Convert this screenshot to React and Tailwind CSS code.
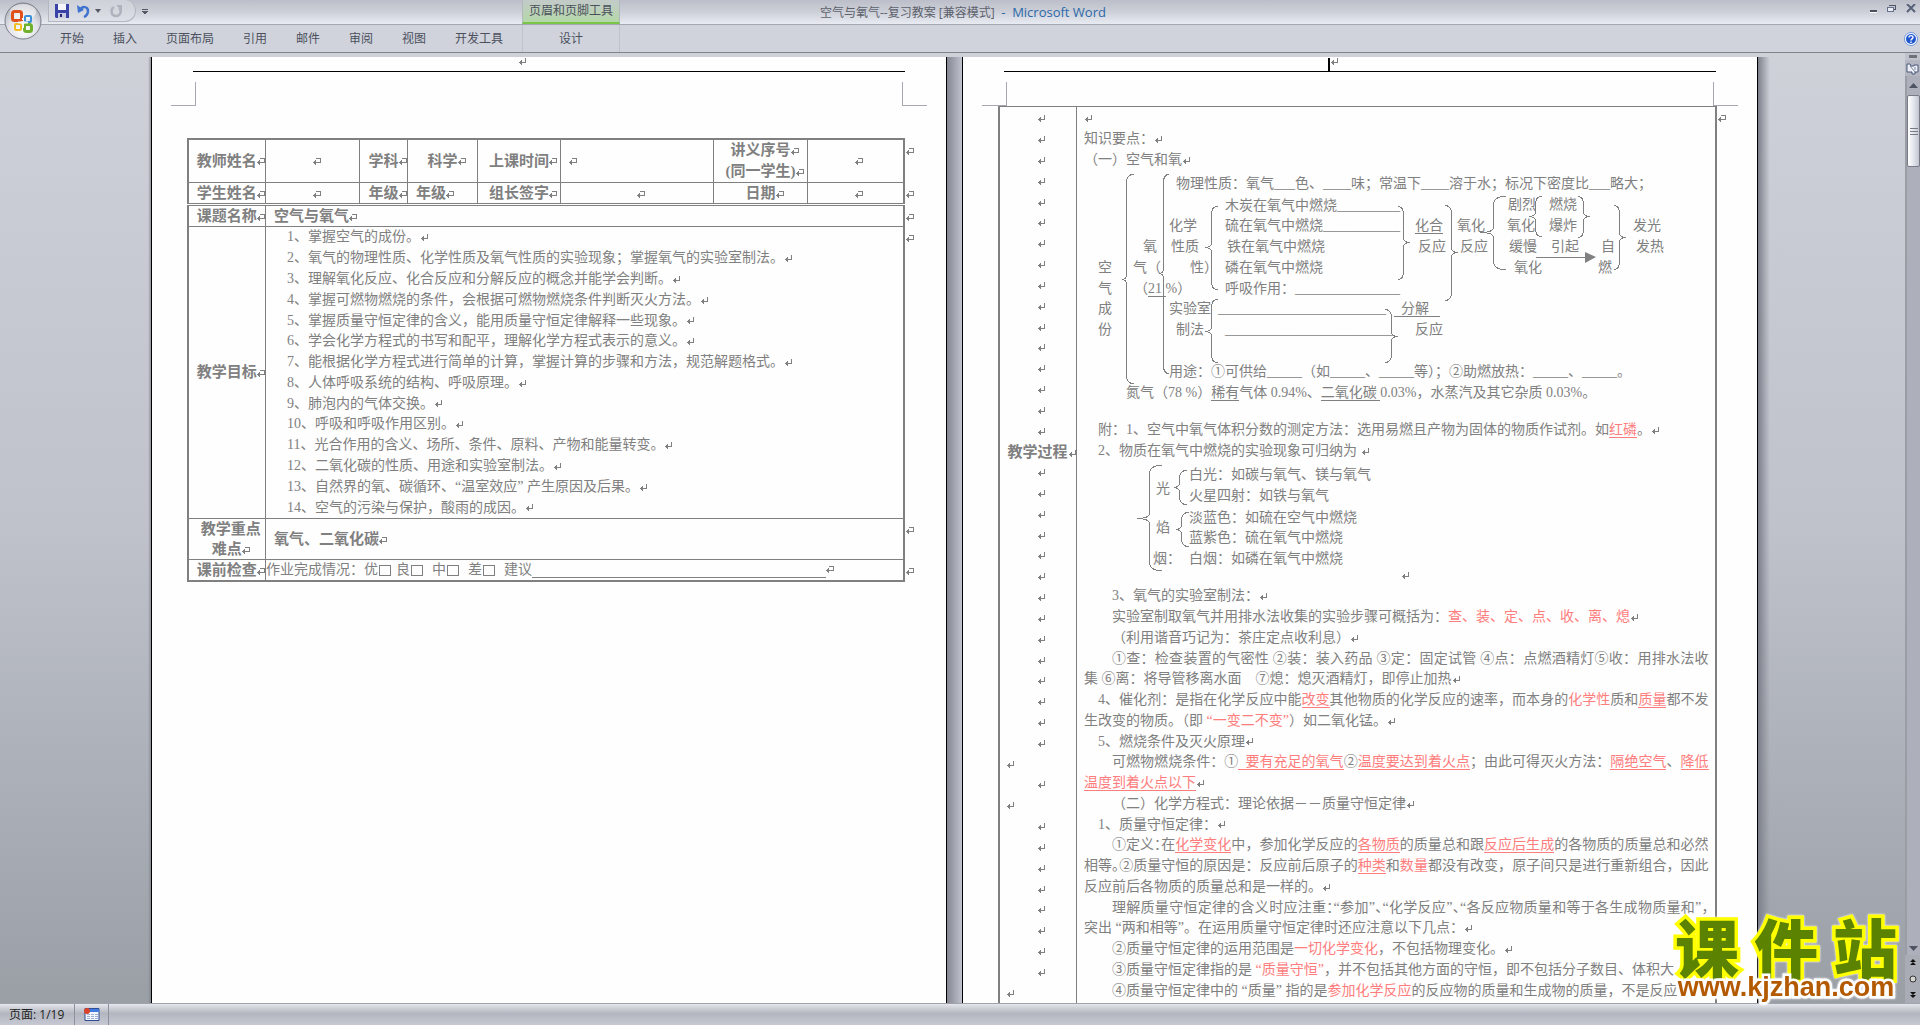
import React from "react";

/* ---------- editing marks ---------- */

function Ret({ className = "" }) {
  return (
    <svg
      aria-hidden="true"
      className={"inline-block h-[8px] w-[9px] shrink-0 align-middle " + className}
      viewBox="0 0 9 8"
      shapeRendering="crispEdges"
    >
      <path d="M7.5 0V4.5H1" fill="none" stroke="#808080" />
      <path d="M1 4h1v-1h1v-1h1v5h-1v-1h-1v-1h-1z" fill="#808080" />
    </svg>
  );
}

function CellEnd({ className = "" }) {
  return (
    <svg
      aria-hidden="true"
      className={"inline-block h-[8px] w-[8px] shrink-0 align-middle " + className}
      viewBox="0 0 8 8"
      shapeRendering="crispEdges"
    >
      <path d="M3.5 1V.5H7.5V4.5H1" fill="none" stroke="#808080" />
      <path d="M0 4h1v-1h1v-1h1v5h-1v-1h-1v-1h-1z" fill="#808080" />
    </svg>
  );
}

function RowEnd() {
  return <CellEnd className="absolute top-2 -right-[11px]" />;
}

/* ---------- title bar and ribbon tabs ---------- */

function OfficeButton() {
  return (
    <button aria-label="Office 按钮" className="absolute top-0.5 left-1 z-10">
      <svg width="38" height="38" viewBox="0 0 38 38">
        <defs>
          <radialGradient id="orb" cx="50%" cy="75%" r="75%">
            <stop offset="0" stopColor="#ffffff" />
            <stop offset="0.55" stopColor="#dfe1e7" />
            <stop offset="1" stopColor="#a6a9b3" />
          </radialGradient>
        </defs>
        <circle cx="19" cy="19" r="18" fill="url(#orb)" stroke="#7c808b" />
        <ellipse cx="19" cy="10" rx="13" ry="8" fill="#fff" opacity="0.55" />
        <rect x="8.500" y="9.500" width="9" height="9" rx="2" fill="none" stroke="#e0501b" strokeWidth="3" />
        <rect x="21" y="14" width="6" height="6" rx="1" fill="none" stroke="#3d8fd8" strokeWidth="2" />
        <rect x="11" y="22" width="6" height="6" rx="1" fill="none" stroke="#f3bd1f" strokeWidth="2" />
        <rect x="20.500" y="22.500" width="7" height="7" rx="2" fill="none" stroke="#6fb02c" strokeWidth="3" />
        <path d="M14 20.500h10M19 16v10" stroke="#f6f6f8" strokeWidth="2" />
        <path d="M16 18h1v1h-1zM18 18h1v1h-1z" fill="#e0501b" />
      </svg>
    </button>
  );
}

function QuickAccess() {
  return (
    <div className="flex h-[22px] w-[88px] items-center rounded-r-full border border-t-0 border-[#b4b7c1] bg-[#dcdee5]/60 pl-1.5">
      <button aria-label="保存">
        <svg width="14" height="14" viewBox="0 0 14 14">
          <path d="M0 0h14v14H1L0 13z" fill="#3a43a8" />
          <path d="M3 0h8v6H3z" fill="#f3f5fb" />
          <path d="M3 9h8v5H3z" fill="#c9cde0" />
          <path d="M5 10h2v3H5z" fill="#23286f" />
        </svg>
      </button>
      <button aria-label="撤消" className="ml-2">
        <svg width="14" height="14" viewBox="0 0 14 14">
          <path d="M3 6C5 2 11 2 11 7c0 3-2 5-4 6" fill="none" stroke="#3f73cf" strokeWidth="2.500" />
          <path d="M0 1l1 8 6-3z" fill="#3f73cf" />
        </svg>
      </button>
      <button aria-label="撤消列表" className="ml-1">
        <svg width="6" height="4" viewBox="0 0 6 4">
          <path d="M0 0h6L3 4z" fill="#555a66" />
        </svg>
      </button>
      <button aria-label="重复" className="ml-2">
        <svg width="14" height="14" viewBox="0 0 14 14">
          <path d="M5 3C1 5 2 12 7 12s6-6 3-8" fill="none" stroke="#b0b3bd" strokeWidth="2.500" />
          <path d="M7 1h6v6z" fill="#b0b3bd" />
        </svg>
      </button>
    </div>
  );
}

function WindowButtons() {
  return (
    <div className="flex items-start gap-2.5 pt-1 pr-1">
      <button aria-label="最小化">
        <svg width="7" height="9" viewBox="0 0 7 9" shapeRendering="crispEdges">
          <path d="M0 6h7v2H0z" fill="#4b4f5c" />
          <path d="M0 8h7v1H0z" fill="#fff" />
        </svg>
      </button>
      <button aria-label="还原">
        <svg width="9" height="8" viewBox="0 0 9 8" shapeRendering="crispEdges">
          <path d="M2.500 1h6v4h-2M2 1.500h7" fill="none" stroke="#4f5565" />
          <path d="M.5 3.500h6v4h-6z" fill="#e9ecf3" stroke="#64708d" />
        </svg>
      </button>
      <button aria-label="关闭">
        <svg width="10" height="9" viewBox="0 0 10 9">
          <path d="M1 0l8 8M9 0L1 8" stroke="#59617a" strokeWidth="2" />
        </svg>
      </button>
    </div>
  );
}

const TABS = ["开始", "插入", "页面布局", "引用", "邮件", "审阅", "视图", "开发工具"];

function TopBars() {
  return (
    <header className="relative shrink-0 text-[12px] text-[#4b505c]">
      <OfficeButton />
      <div className="flex h-[25px] justify-between border-b border-[#a3a7b2] bg-linear-to-b from-[#bcbfc9] via-[#cdd0d8] to-[#e8ebf2]">
        <div className="flex w-[522px] items-start pl-12">
          <QuickAccess />
          <button aria-label="自定义快速访问工具栏" className="mt-[9px] ml-1.5">
            <svg width="6" height="6" viewBox="0 0 6 6" shapeRendering="crispEdges">
              <path d="M0 0h6v1H0zM0 2h6L3 6z" fill="#555a66" />
            </svg>
          </button>
        </div>
        <div className="h-6 w-[98px] border-x border-b-2 border-x-[#b1b9bd] border-b-[#79c64a] bg-linear-to-b from-[#c3cac9] to-[#b5d8a8] text-center leading-[22px]">
          页眉和页脚工具
        </div>
        <h1 className="flex-1 pl-[200px] leading-[25px] whitespace-pre text-[#5d616c]">
          空气与氧气--复习教案 [兼容模式] <span className="text-[13px] text-[#2c69a8]"> -  Microsoft Word</span>
        </h1>
        <WindowButtons />
      </div>
      <nav className="flex h-7 items-center justify-between border-b border-[#7f838e] bg-[#d0d3dc]">
        <div className="flex h-full items-center">
          <div className="flex w-[522px] gap-[29px] pl-[60px]">
            {TABS.map((t) => (
              <button key={t}>{t}</button>
            ))}
          </div>
          <button className="h-full w-[98px] border-x border-[#bfc3cd]">设计</button>
        </div>
        <button aria-label="帮助" className="mr-0.5">
          <svg width="14" height="14" viewBox="0 0 14 14">
            <circle cx="7" cy="7" r="6.500" fill="#fff" stroke="#6c93dd" />
            <circle cx="7" cy="7" r="5" fill="#1f55cf" />
            <path d="M5 5.500c0-2.500 4-2.500 4-.2C9 7 7 6.800 7 8.500M7 9.500V11" fill="none" stroke="#fff" strokeWidth="1.400" />
          </svg>
        </button>
      </nav>
    </header>
  );
}

/* ---------- page frame ---------- */

function Page({ cursor, children }) {
  return (
    <article className="w-[796px] shrink-0 border-x border-black bg-[#fefefe]">
      <div className="mx-[41px] flex h-[15px] items-center justify-center border-b border-black pr-[53px]">
        {cursor && <span className="h-[13px] w-0.5 bg-black" />}
        <Ret className="mb-1" />
      </div>
      <div className="mt-2.5 flex h-6 justify-between px-[19px]">
        <div className="w-[25px] border-r border-b border-[#a5a7b1]" />
        <div className="w-[25px] border-b border-l border-[#a5a7b1]" />
      </div>
      {children}
    </article>
  );
}

/* ---------- left page ---------- */

const GOALS = [
  "掌握空气的成份。",
  "氧气的物理性质、化学性质及氧气性质的实验现象；掌握氧气的实验室制法。",
  "理解氧化反应、化合反应和分解反应的概念并能学会判断。",
  "掌握可燃物燃烧的条件，会根据可燃物燃烧条件判断灭火方法。",
  "掌握质量守恒定律的含义，能用质量守恒定律解释一些现象。",
  "学会化学方程式的书写和配平，理解化学方程式表示的意义。",
  "能根据化学方程式进行简单的计算，掌握计算的步骤和方法，规范解题格式。",
  "人体呼吸系统的结构、呼吸原理。",
  "肺泡内的气体交换。",
  "呼吸和呼吸作用区别。",
  "光合作用的含义、场所、条件、原料、产物和能量转变。",
  "二氧化碳的性质、用途和实验室制法。",
  "自然界的氧、碳循环、“温室效应” 产生原因及后果。",
  "空气的污染与保护，酸雨的成因。",
];

const CELL = "relative border border-[#808080] py-0 pr-0 text-[15px] whitespace-nowrap";
const MID = CELL + " pl-2 text-center";
const LEFT = CELL + " pl-2 text-left";

function InfoTable() {
  return (
    <table className="w-full table-fixed border-collapse border-2 border-b border-[#808080]">
      <colgroup>
        <col className="w-[78px]" />
        <col className="w-[94px]" />
        <col className="w-[48px]" />
        <col className="w-[70px]" />
        <col className="w-[83px]" />
        <col className="w-[153px]" />
        <col className="w-[94px]" />
        <col />
      </colgroup>
      <tbody className="font-bold">
        <tr className="h-[43px] leading-[21px]">
          <th className={MID}>教师姓名<CellEnd /></th>
          <td className={MID}><CellEnd /></td>
          <th className={MID}>学科<CellEnd /></th>
          <th className={MID}>科学<CellEnd /></th>
          <th className={MID}>上课时间<CellEnd /></th>
          <td className={LEFT}><CellEnd /></td>
          <th className={MID}>讲义序号<CellEnd /><br />(同一学生)<CellEnd /></th>
          <td className={MID}><CellEnd /><RowEnd /></td>
        </tr>
        <tr className="leading-5">
          <th className={MID}>学生姓名<CellEnd /></th>
          <td className={MID}><CellEnd /></td>
          <th className={MID}>年级<CellEnd /></th>
          <th className={LEFT}>年级<CellEnd /></th>
          <th className={MID}>组长签字<CellEnd /></th>
          <td className={MID}><CellEnd /></td>
          <th className={MID}>日期<CellEnd /></th>
          <td className={MID}><CellEnd /><RowEnd /></td>
        </tr>
      </tbody>
    </table>
  );
}

function Check({ children, className = "" }) {
  return (
    <label className={"flex items-center " + className}>
      {children}
      <input type="checkbox" className="mx-px h-[11px] w-3 appearance-none border border-[#808080]" />
    </label>
  );
}

function GoalsTable() {
  return (
    <table className="mt-px w-full table-fixed border-collapse border-2 border-t border-[#808080]">
      <colgroup>
        <col className="w-[78px]" />
        <col />
      </colgroup>
      <tbody>
        <tr className="leading-5">
          <th className={MID}>课题名称<CellEnd /></th>
          <th className={LEFT}>空气与氧气<CellEnd /><RowEnd /></th>
        </tr>
        <tr>
          <th className={MID}>教学目标<CellEnd /></th>
          <td className="relative border border-[#808080] p-0">
            <ol className="grid h-[291px] auto-rows-fr items-center pl-[21px] whitespace-pre">
              {GOALS.map((g, i) => (
                <li key={g} className="leading-5">{i + 1}、{g}<Ret /></li>
              ))}
            </ol>
            <RowEnd />
          </td>
        </tr>
        <tr className="leading-5">
          <th className={CELL + " px-2 text-center"}>教学重点<br />难点<CellEnd /></th>
          <th className={LEFT}>氧气、二氧化碳<CellEnd /><RowEnd /></th>
        </tr>
        <tr className="leading-5">
          <th className={MID}>课前检查<CellEnd /></th>
          <td className="relative border border-[#808080] p-0">
            <div className="flex h-5 items-center whitespace-nowrap">
              作业完成情况：
              <Check>优</Check>
              <Check className="ml-1">良</Check>
              <Check className="ml-2">中</Check>
              <Check className="ml-2">差</Check>
              <label htmlFor="advice" className="ml-2">建议</label>
              <input id="advice" className="h-4 w-[294px] border-b border-[#808080] bg-transparent outline-none" />
              <CellEnd />
            </div>
            <RowEnd />
          </td>
        </tr>
      </tbody>
    </table>
  );
}

/* ---------- right page ---------- */

const U = ({ children }) => <span className="border-b border-[#808080]">{children}</span>;
const Red = ({ children }) => <span className="text-[#ff7d7d]">{children}</span>;
const RedU = ({ children }) => <span className="border-b border-[#ff7d7d] text-[#ff7d7d]">{children}</span>;
/* Half-width form of a full-width punctuation mark. */
const Half = ({ children }) => <span className="[font-feature-settings:'halt']">{children}</span>;

function bracePath([end, stem, tip, top, mid, bottom]) {
  return (
    `M${end} ${top}Q${stem} ${top} ${stem} ${top + 8}V${mid - 5}Q${stem} ${mid} ${tip} ${mid}` +
    `Q${stem} ${mid} ${stem} ${mid + 5}V${bottom - 8}Q${stem} ${bottom} ${end} ${bottom}`
  );
}

/* Free canvas: each node is [left, vertical centre, text, underlined]. */
function Diagram({ nodes, braces, arrow, className }) {
  return (
    <div className={"relative whitespace-pre " + className}>
      <svg className="absolute inset-0 h-full w-full" aria-hidden="true">
        <g fill="none" stroke="#808080" shapeRendering="crispEdges" transform="translate(.5 .5)">
          {braces.map((b) => (
            <path key={b.join()} d={bracePath(b)} />
          ))}
          {arrow && <path d="M458 87H508" />}
        </g>
        {arrow && <path d="M508 82L519 87L508 93Z" fill="#808080" />}
      </svg>
      {nodes.map(([x, y, text, line]) => (
        <span key={x + "-" + y} className="absolute leading-5" style={{ left: x, top: y - 10 }}>
          {line ? <U>{text}</U> : text}
        </span>
      ))}
    </div>
  );
}

const AIR_NODES = [
  [21, 98, "空"], [21, 119, "气"], [21, 139, "成"], [21, 160, "份"],
  [66, 77, "氧"], [56, 98, "气（"], [113, 98, "性）"],
  [57, 119, <>（<U>21 </U>%）</>],
  [99, 14, "物理性质：氧气___色、____味；常温下____溶于水；标况下密度比___略大；"],
  [148, 36, "木炭在氧气中燃烧_________"],
  [92, 56, "化学"], [148, 56, "硫在氧气中燃烧___________"],
  [94, 77, "性质"], [150, 77, "铁在氧气中燃烧"],
  [148, 98, "磷在氧气中燃烧"],
  [148, 119, "呼吸作用：_______________"],
  [92, 139, "实验室"], [141, 139, "________________________"], [317, 139, "  分解   ", true],
  [99, 160, "制法"], [148, 160, "________________________"], [338, 160, "反应"],
  [338, 56, "化合", true], [341, 77, "反应"],
  [380, 56, "氧化"], [383, 77, "反应"],
  [431, 35, "剧烈"], [430, 56, "氧化"], [432, 77, "缓慢"], [437, 98, "氧化"],
  [472, 35, "燃烧"], [472, 56, "爆炸"], [474, 77, "引起"],
  [524, 77, "自"], [521, 98, "燃"], [556, 56, "发光"], [559, 77, "发热"],
  [92, 202, "用途：①可供给_____（如_____、_____等）；②助燃放热：_____、_____。"],
  [49, 223, <>氮气（78 %）<U>稀有</U>气体 0.94%、<U>二氧化碳 </U>0.03%，水蒸汽及其它杂质 0.03%。</>],
];

const AIR_BRACES = [
  [56, 49, 44, 4, 109, 213], [91, 86, 81, 4, 103, 203], [140, 134, 127, 36, 77, 119],
  [320, 326, 332, 36, 72, 109], [140, 134, 127, 129, 161, 192], [307, 314, 320, 139, 166, 192],
  [367, 374, 380, 35, 82, 130], [428, 416, 402, 26, 62, 99], [464, 458, 451, 26, 46, 66],
  [500, 506, 512, 26, 46, 67], [536, 542, 548, 35, 67, 99],
];

const BURN_NODES = [
  [79, 28, "光"], [112, 14, "白光：如碳与氧气、镁与氧气"], [112, 35, "火星四射：如铁与氧气"],
  [79, 67, "焰"], [112, 57, "淡蓝色：如硫在空气中燃烧"], [112, 77, "蓝紫色：硫在氧气中燃烧"],
  [76, 98, "烟："], [112, 98, "白烟：如磷在氧气中燃烧"], [324, 114, <Ret />],
];

const BURN_BRACES = [
  [84, 72, 59, 4, 57, 109], [109, 102, 96, 9, 26, 43], [111, 104, 98, 51, 68, 85],
];

function Line({ indent = 0, full, children }) {
  const pad = ["", "pl-3.5 ", "pl-7 "][indent];
  return <p className={pad + "leading-5 whitespace-nowrap " + (full ? "[text-align-last:justify]" : "")}>{children}</p>;
}

function Notes() {
  return (
    <div className="grid h-[415px] auto-rows-fr grid-cols-1 items-center pr-1.5 pl-[7px]">
      <Line indent={2}>3、氧气的实验室制法：<Ret /></Line>
      <Line indent={2}>实验室制取氧气并用排水法收集的实验步骤可概括为：<Red>查、装、定、点、收、离、熄</Red><Ret /></Line>
      <Line indent={2}>（利用谐音巧记为：茶庄定点收利息）<Ret /></Line>
      <Line indent={2} full>①查：检查装置的气密性 ②装：装入药品 ③定：固定试管 ④点：点燃酒精灯⑤收：用排水法收</Line>
      <Line>集 ⑥离：将导管移离水面&nbsp;&nbsp;&nbsp; ⑦熄：熄灭酒精灯，即停止加热<Ret /></Line>
      <Line indent={1} full>4、催化剂：是指在化学反应中能<RedU>改变</RedU>其他物质的化学反应的速率，而本身的<Red>化学性</Red>质和<RedU>质量</RedU>都不发</Line>
      <Line>生改变的物质。（即 <Red>“一变二不变”</Red>）如二氧化锰。<Ret /></Line>
      <Line indent={1}>5、燃烧条件及灭火原理<Ret /></Line>
      <Line indent={2} full>可燃物燃烧条件：①<RedU>&nbsp; 要有充足的氧气</RedU>②<RedU>温度要达到着火点</RedU>；由此可得灭火方法：<RedU>隔绝空气</RedU>、<RedU>降低</RedU></Line>
      <Line><RedU>温度到着火点以下</RedU><Ret /></Line>
      <Line indent={2}>（二）化学方程式：理论依据－－质量守恒定律<Ret /></Line>
      <Line indent={1}>1、质量守恒定律：<Ret /></Line>
      <Line indent={2} full>①定义<Half>：</Half>在<RedU>化学变化</RedU>中，参加化学反应的<RedU>各物质</RedU>的质量总和跟<RedU>反应后生成</RedU>的各物质的质量总和必然</Line>
      <Line full>相等<Half>。</Half>②质量守恒的原因是：反应前后原子的<RedU>种类</RedU>和<Red>数量</Red>都没有改变，原子间只是进行重新组合，因此</Line>
      <Line>反应前后各物质的质量总和是一样的。<Ret /></Line>
      <Line indent={2} full>理解质量守恒定律的含义时应注重<Half>：</Half>“参加”<Half>、</Half>“化学反应”<Half>、</Half>“各反应物质量和等于各生成物质量和”<Half>，</Half></Line>
      <Line>突出 “两和相等”。在运用质量守恒定律时还应注意以下几点：<Ret /></Line>
      <Line indent={2}>②质量守恒定律的运用范围是<Red>一切化学变化</Red>，不包括物理变化。<Ret /></Line>
      <Line indent={2}>③质量守恒定律指的是 <Red>“质量守恒”</Red>，并不包括其他方面的守恒，即不包括分子数目、体积大</Line>
      <Line indent={2}>④质量守恒定律中的 “质量” 指的是<Red>参加化学反应</Red>的反应物的质量和生成物的质量，不是反应</Line>
    </div>
  );
}

/* Rows of the narrow column whose mark is set at the left edge. */
const LEFT_MARKS = [31, 33, 42];
const TITLE_ROW = 16;

function MarginColumn() {
  return (
    <div className="grid h-[897px] auto-rows-fr items-center pt-0.5">
      {Array.from({ length: 43 }, (_, i) => {
        if (i === TITLE_ROW) {
          return (
            <div key={i} className="pl-2 text-center text-[15px] leading-5 font-bold whitespace-nowrap">
              教学过程<Ret />
            </div>
          );
        }
        return (
          <div key={i} className={LEFT_MARKS.includes(i) ? "flex pl-1.5" : "flex pl-[37px]"}>
            <Ret />
          </div>
        );
      })}
    </div>
  );
}

function ProcessTable() {
  return (
    <table className="w-full table-fixed border-collapse border-x-2 border-t border-[#808080]">
      <colgroup>
        <col className="w-[78px]" />
        <col />
      </colgroup>
      <tbody>
        <tr>
          <th className="border-r border-[#808080] p-0 text-left align-top">
            <MarginColumn />
          </th>
          <td className="relative p-0 align-top">
            <div className="pl-[7px] leading-[21px] whitespace-pre">
              <p><Ret /></p>
              <p>知识要点：<Ret /></p>
              <p>（一）空气和氧<Ret /></p>
            </div>
            <Diagram className="h-[235px]" nodes={AIR_NODES} braces={AIR_BRACES} arrow />
            <div className="pt-3.5 pl-[21px] leading-[21px] whitespace-pre">
              <p>附：1、空气中氧气体积分数的测定方法：选用易燃且产物为固体的物质作试剂。如<RedU>红磷</RedU>。<Ret /></p>
              <p>2、物质在氧气中燃烧的实验现象可归纳为 <Ret /></p>
            </div>
            <Diagram className="h-[125px]" nodes={BURN_NODES} braces={BURN_BRACES} />
            <Notes />
            <RowEnd />
          </td>
        </tr>
      </tbody>
    </table>
  );
}

/* ---------- scroll bar, watermark, status bar ---------- */

function ScrollBar() {
  return (
    <aside className="flex w-[15px] shrink-0 flex-col items-center bg-[#c0c3cc]">
      <div className="mt-0.5 h-[3px] w-2 bg-[#6f727a]" />
      <button aria-label="标尺" className="mt-0.5 flex h-4 w-full items-center justify-center bg-[#b4b7c1]">
        <svg width="13" height="13" viewBox="0 0 13 13">
          <path d="M1 2h3l1 2h3v-1h4v7h-3v2h-3v-2H1z" fill="#eef0f6" stroke="#48577a" />
          <path d="M4 4l5 6M9 5v3" stroke="#7a86a3" />
        </svg>
      </button>
      <div className="flex w-full flex-1 flex-col items-center border-l-2 border-[#9a9da6] bg-[#adb0ba]">
        <button aria-label="向上滚动" className="flex h-[19px] items-center">
          <svg width="9" height="5" viewBox="0 0 9 5"><path d="M4.500 0L9 5H0z" fill="#4e5361" /></svg>
        </button>
        <div className="flex h-[72px] w-full flex-col items-center justify-center gap-0.5 rounded-xs border border-[#777b86] bg-linear-to-r from-white via-[#e4e6ee] to-[#c3c6d0]">
          <span className="h-px w-2 bg-[#777b86]" />
          <span className="h-px w-2 bg-[#777b86]" />
          <span className="h-px w-2 bg-[#777b86]" />
        </div>
        <button aria-label="向下滚动" className="mt-auto flex h-[14px] items-center">
          <svg width="9" height="5" viewBox="0 0 9 5"><path d="M0 0h9L4.500 5z" fill="#4e5361" /></svg>
        </button>
      </div>
      <div className="flex h-[48px] w-full flex-col items-center justify-around bg-[#a9acb5]">
        <button aria-label="前一页">
          <svg width="6" height="7" viewBox="0 0 6 7"><path d="M3 0l3 3H0zM3 3l3 3H0z" fill="#111" /></svg>
        </button>
        <button aria-label="选择浏览对象">
          <svg width="8" height="8" viewBox="0 0 8 8"><circle cx="4" cy="4" r="3" fill="#d5d5d2" stroke="#333" /></svg>
        </button>
        <button aria-label="下一页">
          <svg width="6" height="7" viewBox="0 0 6 7"><path d="M0 0h6L3 3zM0 3h6L3 6z" fill="#111" /></svg>
        </button>
      </div>
    </aside>
  );
}

function Watermark() {
  return (
    <a
      href="#kjzhan"
      className="absolute right-[19px] bottom-0 flex w-[230px] flex-col items-center drop-shadow-[0_0_1px_white]"
    >
      <span className="flex w-full justify-between px-1 text-[64px] leading-[52px] font-black text-[#5b8200] [-webkit-text-stroke:7px_#ffff00] [font-family:'Noto_Sans_CJK_SC',sans-serif] [paint-order:stroke_fill]">
        <span>课</span>
        <span>件</span>
        <span>站</span>
      </span>
      <span className="relative text-[27px] leading-8 font-bold text-[#b35900] [-webkit-text-stroke:5px_#ffffff] [font-family:'Liberation_Sans',sans-serif] [paint-order:stroke_fill]">
        www.kjzhan.com
      </span>
    </a>
  );
}

function StatusBar() {
  return (
    <footer className="flex h-[22px] shrink-0 items-stretch border-t border-[#a0a3ac] bg-linear-to-b from-[#e4e6ec] from-0% via-[#b3b6bf] via-45% to-[#c6c9d3] text-[12px] text-[#222]">
      <button className="flex w-[75px] items-center border-r border-[#8e919b] pl-[9px]">页面: 1/19</button>
      <button aria-label="宏录制" className="flex w-[34px] items-center justify-center border-r border-[#8e919b]">
        <svg width="16" height="13" viewBox="0 0 16 13">
          <path d="M1 .5h14v12H1z" fill="#f3f6fc" stroke="#2d4d94" />
          <path d="M2 1h13v3H2z" fill="#3f7be0" />
          <path d="M3 6.500h11M3 8.500h11M3 10.500h11" stroke="#9db0d6" strokeDasharray="3 1" />
          <circle cx="3" cy="3" r="3" fill="#d9432a" />
        </svg>
      </button>
    </footer>
  );
}

export default function App() {
  return (
    <div className="flex h-screen flex-col overflow-hidden bg-[#d2ced9] [font-family:'Open_Sans','Noto_Sans_CJK_SC',sans-serif]">
      <TopBars />
      <div className="relative flex min-h-0 flex-1">
        <main className="flex min-w-0 flex-1 justify-center overflow-hidden bg-linear-to-b from-[#cfd1d9] via-[#bfc2cb] to-[#9a9fa6] pt-1 pl-3 text-[14px] text-[#808080] [font-family:'Liberation_Serif','Noto_Sans_CJK_SC',sans-serif]">
          <div className="w-[3px] shrink-0 bg-linear-to-r from-transparent to-[#777a84]/70" />
          <Page>
            <div className="mt-8 mr-[41px] ml-[35px]">
              <InfoTable />
              <GoalsTable />
            </div>
          </Page>
          <div className="w-[15px] shrink-0 bg-linear-to-r from-[#858893] to-[#c0c3cd]" />
          <Page cursor>
            <div className="mr-[40px] ml-[35px]">
              <ProcessTable />
            </div>
          </Page>
          <div className="w-3 shrink-0 bg-linear-to-r from-[#7d808b] to-transparent" />
        </main>
        <ScrollBar />
        <Watermark />
      </div>
      <StatusBar />
    </div>
  );
}
